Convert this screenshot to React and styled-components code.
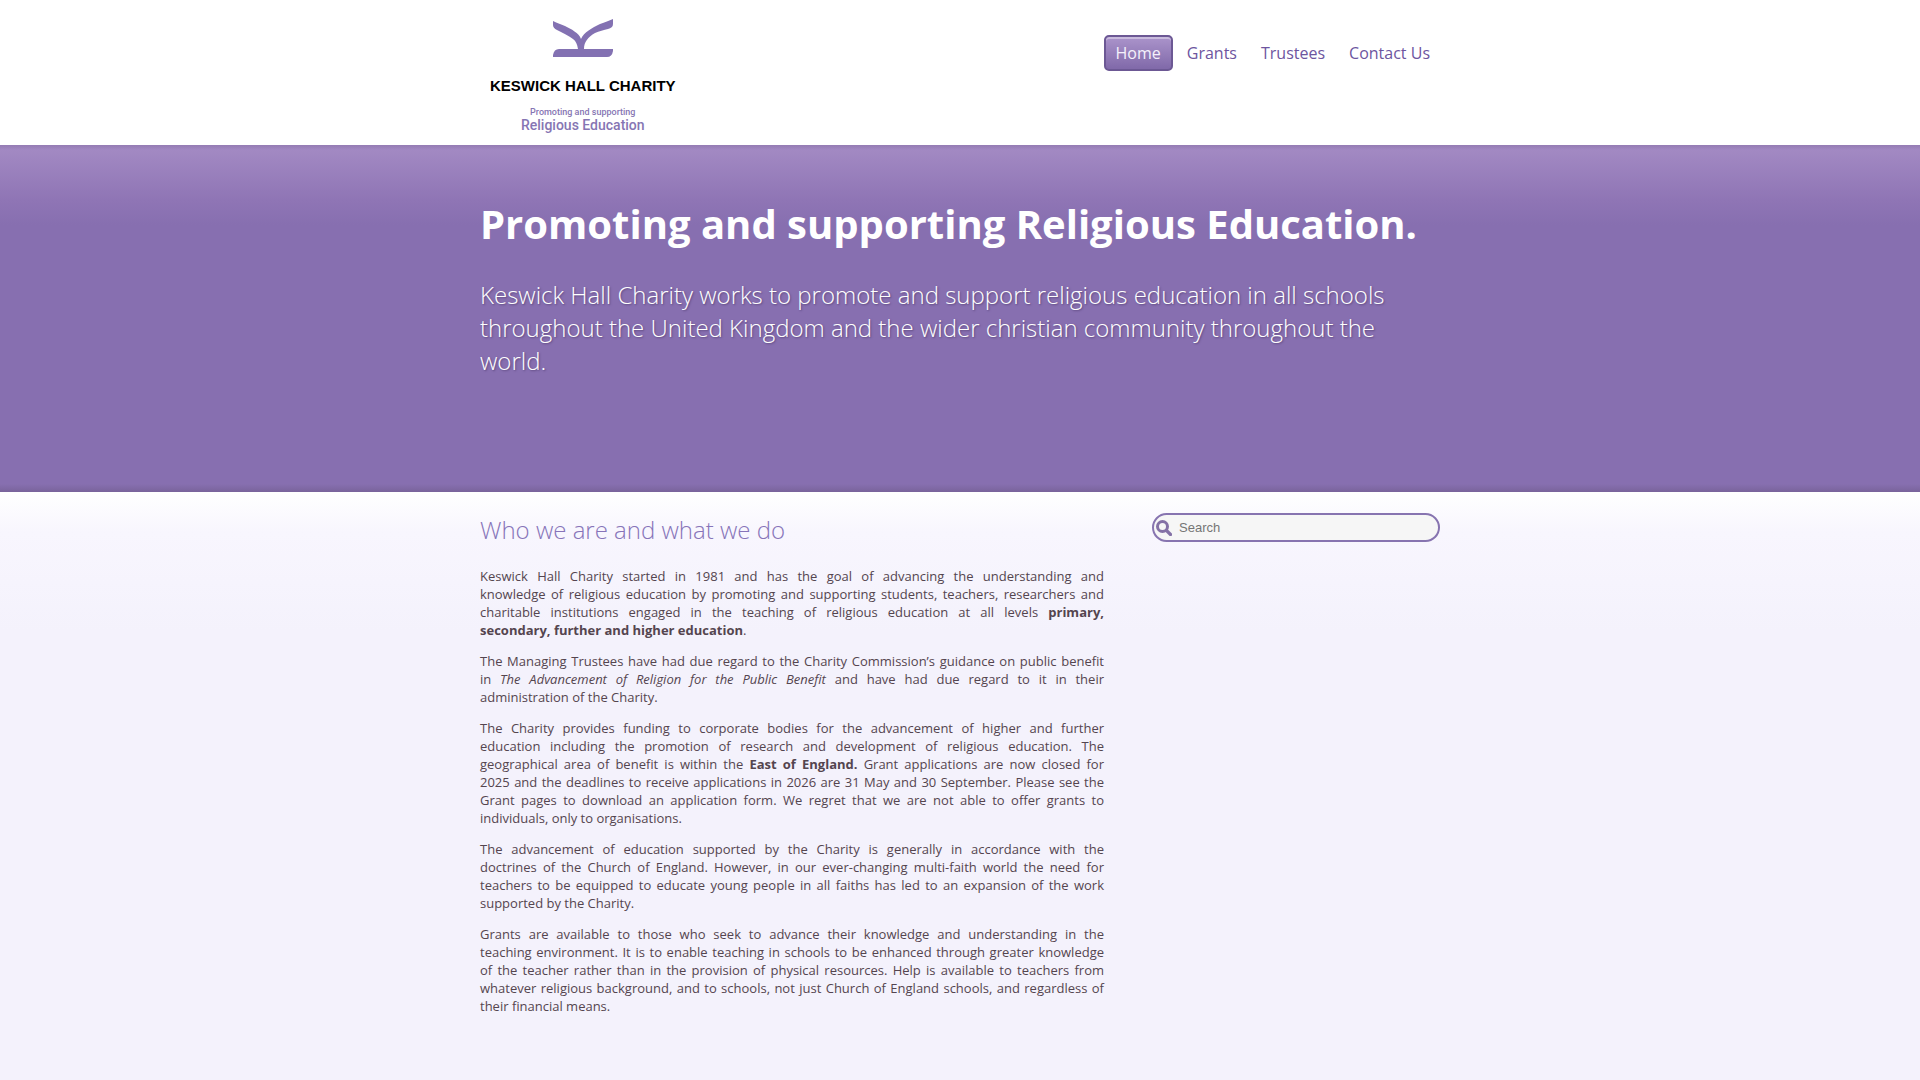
import React from 'react';
import styled, { createGlobalStyle, css } from 'styled-components';

const GlobalStyle = createGlobalStyle`
  * {
    box-sizing: border-box;
  }

  body {
    margin: 0;
    min-height: 100vh;
    background: #f4f2fc;
    color: #54454f;
    font-family: 'Open Sans', sans-serif;
    font-size: 13px;
    line-height: 18px;
  }
`;

const Container = styled.div`
  width: 100%;
  max-width: 960px;
  margin: 0 auto;
`;

const Header = styled.header`
  background: #fff;
`;

const HeaderInner = styled(Container)`
  display: flex;
  justify-content: space-between;
  align-items: flex-start;
  min-height: 145px;
`;

const Logo = styled.a`
  display: flex;
  flex-direction: column;
  align-items: center;
  padding: 19px 10px 0;
  color: #8675b3;
  text-align: center;
  text-decoration: none;
`;

const LogoMark = styled.svg`
  display: block;
  width: 60px;
  height: 38px;
`;

const LogoName = styled.span`
  margin-top: 21px;
  color: #000;
  font: bold 15px/16px 'Liberation Sans', sans-serif;
`;

const LogoTagline = styled.span`
  margin-top: 12px;
  font: 500 9px/12px Roboto, sans-serif;
`;

const LogoSubject = styled.span`
  font: 500 14px/14px Roboto, sans-serif;
`;

const Nav = styled.nav`
  display: flex;
  flex-wrap: wrap;
  align-items: center;
  gap: 4px;
  padding-top: 35px;
`;

const NavLink = styled.a`
  padding: 5px 10px;
  border-radius: 5px;
  color: #6d559f;
  font-size: 16px;
  line-height: 22px;
  text-decoration: none;

  ${({ $active }) => $active && css`
    border: 2px solid #6c5894;
    background: linear-gradient(#ab94cb, #8069a9);
    box-shadow: inset 0 2px 0 #c9bbdd;
    color: #f4f1fb;
  `}
`;

const Hero = styled.section`
  min-height: 347px;
  padding: 52px 0 48px;
  background:
    linear-gradient(rgba(80, 60, 110, 0.2), rgba(80, 60, 110, 0) 5px),
    linear-gradient(to top, #79639b, rgba(121, 99, 155, 0) 8px),
    linear-gradient(#a48bc4, #8f75b5 55px, #876fb0 80px);
  color: #fff;
`;

const HeroTitle = styled.h1`
  margin: 0;
  font-size: 40px;
  font-weight: 700;
  line-height: 54px;
`;

const HeroText = styled.p`
  margin: 27px 0 0;
  font-size: 24px;
  font-weight: 300;
  line-height: 33px;
  text-shadow: 1px 1px 2px #5f4a80;
`;

const Content = styled.main`
  background: linear-gradient(#fff, #f8f6fe 40px, #f4f2fc 140px);
`;

const Columns = styled(Container)`
  display: grid;
  grid-template-columns: 65% 30%;
  justify-content: space-between;
  align-items: start;
  padding: 21px 0 48px;
`;

const Heading = styled.h2`
  margin: 0 0 20px;
  color: #8774b9;
  font-size: 24px;
  font-weight: 300;
  line-height: 34px;
`;

const Paragraph = styled.p`
  margin: 0 0 13px;
  text-align: justify;
`;

const SearchBox = styled.label`
  display: flex;
  align-items: center;
  height: 29px;
  padding: 0 12px 0 2px;
  border: 2px solid #8774b0;
  border-radius: 15px;
  background: #f6f6f6;
`;

const SearchIcon = styled.svg`
  flex: none;
  width: 16px;
  height: 16px;
`;

const SearchInput = styled.input`
  flex: 1;
  min-width: 0;
  margin-left: 7px;
  padding: 0;
  border: 0;
  outline: 0;
  background: transparent;
  font: 13px/18px 'Liberation Sans', sans-serif;

  &::placeholder {
    color: #757575;
  }
`;

const navItems = ['Home', 'Grants', 'Trustees', 'Contact Us'];

const App = () => {
  return (
    <>
      <GlobalStyle />
      <Header>
        <HeaderInner>
          <Logo href="#home">
            <LogoMark viewBox="0 0 60 38" fill="#8371b2" aria-hidden="true">
              <path d="M0 2C3 4 8 5 12 7C18 10 26 14 28 20C31 13 39 9 47 5C52 3 56 2 60 0V5C60 8 58 9 55 10C51 11 46 12 42 14C35 18 31 23 31 30H60V32Q59 38 54 38H0V36Q1 30 6 30H25C24 25 23 22 20 20C16 17 10 14 4 11Q0 9 0 6Z" />
            </LogoMark>
            <LogoName>KESWICK HALL CHARITY</LogoName>
            <LogoTagline>Promoting and supporting</LogoTagline>
            <LogoSubject>Religious Education</LogoSubject>
          </Logo>
          <Nav>
            {navItems.map((item, index) => (
              <NavLink key={item} href="#" $active={index === 0}>{item}</NavLink>
            ))}
          </Nav>
        </HeaderInner>
      </Header>

      <Hero>
        <Container>
          <HeroTitle>Promoting and supporting Religious Education.</HeroTitle>
          <HeroText>
            Keswick Hall Charity works to promote and support religious education in all schools
            throughout the United Kingdom and the wider christian community throughout the world.
          </HeroText>
        </Container>
      </Hero>

      <Content>
        <Columns>
          <article>
            <Heading>Who we are and what we do</Heading>
            <Paragraph>
              Keswick Hall Charity started in 1981 and has the goal of advancing the understanding
              and knowledge&nbsp;of religious education by promoting and supporting students,
              teachers, researchers and charitable institutions engaged in the teaching of religious
              education at all
              levels <strong>primary, secondary,&nbsp;further and higher education</strong>.
            </Paragraph>
            <Paragraph>
              The Managing Trustees have had due regard to the Charity Commission’s guidance on
              public benefit in&nbsp;<em>The Advancement of Religion for the Public Benefit</em> and
              have had due regard to it in their administration&nbsp;of the Charity.
            </Paragraph>
            <Paragraph>
              The Charity provides funding to corporate bodies for the advancement of higher and
              further education&nbsp;including the promotion of research and development of
              religious education. The geographical&nbsp;area of benefit is within
              the <strong>East of England.</strong> Grant applications are now closed for
              2025&nbsp;and the deadlines to receive applications in 2026 are 31 May and 30
              September. Please see the Grant&nbsp;pages to download an application form. We regret
              that we are not able to offer grants to individuals,&nbsp;only to organisations.
            </Paragraph>
            <Paragraph>
              The advancement of education supported by the Charity is generally in accordance with
              the doctrines&nbsp;of the Church of England. However, in our ever-changing multi-faith
              world the need for teachers&nbsp;to be equipped to educate young people in all faiths
              has led to an expansion of the work supported&nbsp;by the Charity.
            </Paragraph>
            <Paragraph>
              Grants are available to those who seek to advance their knowledge and understanding in
              the teaching&nbsp;environment. It is to enable teaching in schools to be enhanced
              through greater knowledge of&nbsp;the&nbsp;teacher rather than in the provision of
              physical resources. Help is available to teachers from whatever&nbsp;religious
              background, and to schools, not just Church of England schools, and regardless of
              their&nbsp;financial means.
            </Paragraph>
          </article>
          <aside>
            <SearchBox>
              <SearchIcon viewBox="0 0 16 16" fill="none" stroke="#8471a6" aria-hidden="true">
                <circle cx="6.5" cy="6.5" r="5" strokeWidth="3" />
                <path d="M10.5 10.5L14.5 14.5" strokeWidth="3.2" strokeLinecap="round" />
              </SearchIcon>
              <SearchInput type="text" placeholder="Search" aria-label="Search" />
            </SearchBox>
          </aside>
        </Columns>
      </Content>
    </>
  );
};

export default App;
